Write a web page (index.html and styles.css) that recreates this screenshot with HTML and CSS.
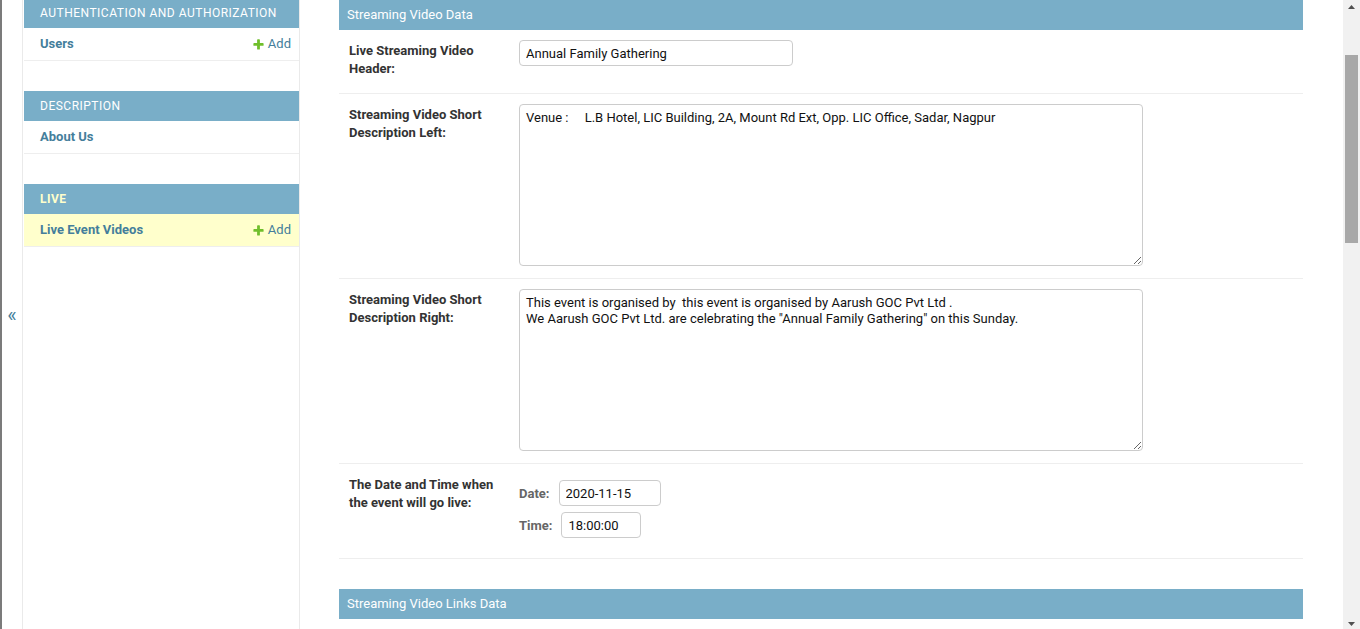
FILE: index.html
```html
<!DOCTYPE html>
<html lang="en">
<head>
<meta charset="utf-8">
<title>Change live event video | Django site admin</title>
<link rel="stylesheet" href="styles.css">
</head>
<body>
<div class="frame-edge"></div>
<button class="toggle-nav" type="button" aria-label="Toggle navigation">«</button>
<nav class="nav-sidebar">
  <div class="app-module">
    <div class="caption">Authentication and Authorization</div>
    <div class="model-row">
      <a class="model-link" href="#">Users</a>
      <a class="addlink" href="#"><svg class="add-icon" viewBox="0 0 1792 1792" width="13" height="13"><path fill="#70bf2b" d="M1600 796v192q0 40-28 68t-68 28h-416v416q0 40-28 68t-68 28h-192q-40 0-68-28t-28-68v-416h-416q-40 0-68-28t-28-68v-192q0-40 28-68t68-28h416v-416q0-40 28-68t68-28h192q40 0 68 28t28 68v416h416q40 0 68 28t28 68z"/></svg>Add</a>
    </div>
  </div>
  <div class="app-module">
    <div class="caption">Description</div>
    <div class="model-row">
      <a class="model-link" href="#">About Us</a>
    </div>
  </div>
  <div class="app-module">
    <div class="caption current-app">Live</div>
    <div class="model-row current-model">
      <a class="model-link" href="#">Live Event Videos</a>
      <a class="addlink" href="#"><svg class="add-icon" viewBox="0 0 1792 1792" width="13" height="13"><path fill="#70bf2b" d="M1600 796v192q0 40-28 68t-68 28h-416v416q0 40-28 68t-68 28h-192q-40 0-68-28t-28-68v-416h-416q-40 0-68-28t-28-68v-192q0-40 28-68t68-28h416v-416q0-40 28-68t68-28h192q40 0 68 28t28 68v416h416q40 0 68 28t28 68z"/></svg>Add</a>
    </div>
  </div>
</nav>
<main class="content">
  <fieldset class="module">
    <h2>Streaming Video Data</h2>
    <div class="form-row">
      <label class="field-label" for="f-header">Live Streaming Video Header:</label>
      <input class="text-input" id="f-header" type="text" value="Annual Family Gathering">
    </div>
    <div class="form-row">
      <label class="field-label" for="f-left">Streaming Video Short Description Left:</label>
      <textarea class="large-text" id="f-left">Venue :     L.B Hotel, LIC Building, 2A, Mount Rd Ext, Opp. LIC Office, Sadar, Nagpur</textarea>
    </div>
    <div class="form-row">
      <label class="field-label" for="f-right">Streaming Video Short Description Right:</label>
      <textarea class="large-text" id="f-right">This event is organised by  this event is organised by Aarush GOC Pvt Ltd .
We Aarush GOC Pvt Ltd. are celebrating the "Annual Family Gathering" on this Sunday.</textarea>
    </div>
    <div class="form-row">
      <label class="field-label">The Date and Time when the event will go live:</label>
      <div class="datetime">
        <div class="dt-line"><span class="dt-label">Date:</span><input class="text-input date-input" type="text" value="2020-11-15"></div>
        <div class="dt-line"><span class="dt-label">Time:</span><input class="text-input time-input" type="text" value="18:00:00"></div>
      </div>
    </div>
  </fieldset>
  <fieldset class="module">
    <h2>Streaming Video Links Data</h2>
  </fieldset>
</main>
<div class="scrollbar" aria-hidden="true">
  <div class="sb-up"><svg width="7" height="4" viewBox="0 0 7 4"><path d="M0 4L3.5 0L7 4Z" fill="#505050"/></svg></div>
  <div class="sb-thumb"></div>
  <div class="sb-space"></div>
  <div class="sb-down"><svg width="7" height="4" viewBox="0 0 7 4"><path d="M0 0L3.5 4L7 0Z" fill="#505050"/></svg></div>
</div>
</body>
</html>
```
FILE: styles.css
```css
html, body {
  margin: 0;
  padding: 0;
  height: 629px;
  overflow: hidden;
}

body {
  display: flex;
  background: #fff;
  font-family: Roboto, "Liberation Sans", Arial, sans-serif;
  font-size: 14px;
  color: #333;
}

.frame-edge {
  flex: 0 0 2px;
  background: #7b7b7b;
}

.toggle-nav {
  flex: 0 0 21px;
  box-sizing: border-box;
  border: 0;
  border-right: 1px solid #eaeaea;
  background: #fff;
  padding: 0;
  margin: 0;
  display: flex;
  align-items: center;
  justify-content: center;
  font-family: Roboto, sans-serif;
  font-size: 20px;
  color: #447e9b;
  cursor: pointer;
}

.nav-sidebar {
  flex: 0 0 276px;
  box-sizing: border-box;
  margin-left: 1px;
  border-right: 1px solid #eaeaea;
  background: #fff;
}

.app-module {
  margin-bottom: 30px;
}

.app-module:first-child {
  margin-top: -2px;
}

.caption {
  background: #79aec8;
  color: #fff;
  font-size: 12px;
  line-height: 14px;
  letter-spacing: 0.5px;
  text-transform: uppercase;
  padding: 8px 8px 8px 16px;
}

.caption.current-app {
  color: #ffc;
  font-weight: bold;
}

.model-row {
  display: flex;
  justify-content: space-between;
  align-items: flex-start;
  padding: 8px 8px 8px 16px;
  font-size: 13px;
  line-height: 16px;
  border-bottom: 1px solid #eee;
}

.current-model {
  background: #ffc;
}

.model-link {
  color: #447e9b;
  font-weight: bold;
  text-decoration: none;
}

.addlink {
  display: flex;
  align-items: flex-start;
  color: #447e9b;
  text-decoration: none;
}

.add-icon {
  margin-top: 2px;
  margin-right: 3px;
}

.content {
  flex: 1 1 auto;
  min-width: 0;
  padding: 0 40px 0 39px;
}

.module {
  border: 0;
  margin: 0 0 30px 0;
  padding: 0;
  min-width: 0;
}

.module h2 {
  margin: 0;
  padding: 8px;
  font-size: 13px;
  line-height: 14px;
  font-weight: 400;
  background: #79aec8;
  color: #fff;
}

.form-row {
  display: flex;
  align-items: flex-start;
  padding: 10px;
  font-size: 13px;
  border-bottom: 1px solid #eee;
}

.field-label {
  flex: 0 0 170px;
  box-sizing: border-box;
  padding: 2px 10px 5px 0;
  font-weight: bold;
  color: #333;
  line-height: 18px;
}

.text-input {
  box-sizing: border-box;
  width: 274px;
  height: 26px;
  margin: 0;
  padding: 5px 6px;
  border: 1px solid #ccc;
  border-radius: 4px;
  font-family: Roboto, sans-serif;
  font-size: 13px;
  color: #111;
  background: #fff;
}

.large-text {
  display: block;
  box-sizing: border-box;
  width: 624px;
  height: 162px;
  margin: 0 0 2px 0;
  padding: 5px 6px;
  border: 1px solid #ccc;
  border-radius: 4px;
  font-family: Roboto, sans-serif;
  font-size: 13px;
  line-height: 16px;
  color: #111;
  background: #fff;
}

.datetime {
  display: flex;
  flex-direction: column;
  gap: 6px;
  padding: 6px 0 10px 0;
}

.dt-line {
  display: flex;
  align-items: center;
}

.dt-label {
  color: #666;
  font-weight: bold;
  margin-right: 9px;
}

.date-input {
  width: 102px;
}

.time-input {
  width: 80px;
}

.scrollbar {
  flex: 0 0 17px;
  display: flex;
  flex-direction: column;
  align-items: center;
  background: #f1f1f1;
}

.sb-up {
  height: 17px;
  box-sizing: border-box;
  padding-top: 4px;
  line-height: 0;
}

.sb-thumb {
  width: 13px;
  height: 188px;
  margin-top: 38px;
  background: #a8a8a8;
}

.sb-space {
  flex: 1 1 auto;
}

.sb-down {
  height: 17px;
  box-sizing: border-box;
  padding-top: 9px;
  line-height: 0;
}
```
